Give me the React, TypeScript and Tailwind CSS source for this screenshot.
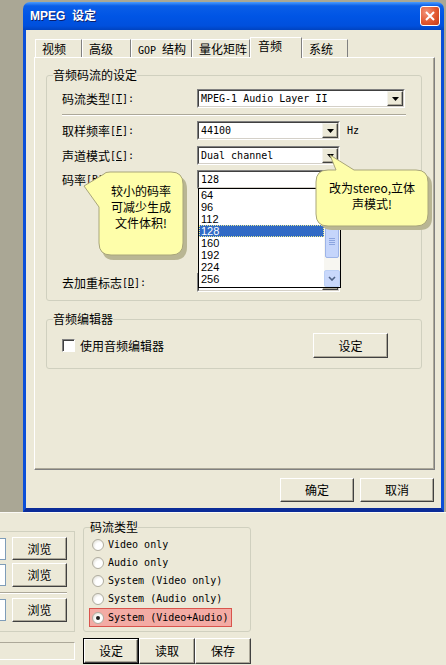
import React from "react";

const CJK = "font-['Noto_Sans_CJK_SC',sans-serif]";
const MONO = "font-['DejaVu_Sans_Mono','Noto_Sans_CJK_SC',monospace]";

function Btn({ className = "", children }: { className?: string; children: React.ReactNode }) {
  return (
    <div
      className={`${className} box-border flex items-center justify-center bg-[#ece9d8] border border-t-white border-l-white border-r-[#404040] border-b-[#404040] shadow-[inset_-1px_-1px_0_#aca899] text-[12px] leading-[14px] ${CJK}`}
    >
      {children}
    </div>
  );
}

function Arrow() {
  return (
    <div className="ml-auto w-[16px] h-full box-border flex items-center justify-center bg-[#ece9d8] border border-t-[#f4f3ee] border-l-[#f4f3ee] border-r-[#404040] border-b-[#404040] shadow-[inset_-1px_-1px_0_#aca899]">
      <svg width="7" height="4" viewBox="0 0 7 4">
        <path d="M0 0H7L3.5 4Z" fill="#000" />
      </svg>
    </div>
  );
}

function Combo({ className = "", text }: { className?: string; text: string }) {
  return (
    <div
      className={`${className} h-[19px] box-border flex bg-white border border-t-[#808080] border-l-[#808080] border-b-white border-r-white`}
    >
      <div className="flex-1 flex items-center box-border border border-t-[#404040] border-l-[#404040] border-b-[#d4d0c8] border-r-[#d4d0c8]">
        <span className={`pl-[2px] text-[10px] leading-[12px] ${MONO}`}>{text}</span>
        <Arrow />
      </div>
    </div>
  );
}

function Label({ cn, key1 }: { cn: string; key1: string }) {
  return (
    <div className="w-[135px] flex items-center">
      <span className={`text-[12px] leading-[14px] ${CJK}`}>{cn}</span>
      <span className={`text-[10px] leading-[12px] ${MONO}`}>
        [<span className="underline">{key1}</span>]:
      </span>
    </div>
  );
}

function Radio({ checked = false }: { checked?: boolean }) {
  return (
    <div className="w-[12px] h-[12px] rounded-full box-border border border-[#b0ada0] bg-[radial-gradient(circle_at_65%_65%,#ffffff_40%,#d6d4c8_100%)] flex items-center justify-center">
      {checked && <div className="w-[4px] h-[4px] rounded-full bg-[#202020]" />}
    </div>
  );
}

function Input6() {
  return <div className="w-[6px] h-[22px] bg-white border border-l-0 border-t-[#7f9db9] border-b-[#7f9db9] border-r-[#7f9db9]" />;
}

export default function App() {
  const items = ["64", "96", "112", "128", "160", "192", "224", "256"];
  const radios = ["Video only", "Audio only", "System (Video only)", "System (Audio only)"];
  return (
    <div className={`w-[446px] h-[665px] relative overflow-hidden bg-[#ece9d8] text-black ${CJK}`}>
      {/* top region with dialog */}
      <div className="h-[512px] bg-[#aaa795] pt-[2px] pl-[23px]">
        <div className="w-[421px] h-[510px] flex flex-col rounded-t-[7px] overflow-hidden">
          {/* title bar */}
          <div className="h-[28px] flex items-center pl-[7px] pr-[4px] bg-[linear-gradient(to_bottom,#4a9cff_0%,#0a5ee8_14%,#0055e5_50%,#0050dd_85%,#0043c0_100%)]">
            <span className="text-white font-bold text-[12px] leading-[14px] font-['Liberation_Sans','Noto_Sans_CJK_SC',sans-serif] [text-shadow:1px_1px_0_#0a1f6e]">
              MPEG&nbsp;&nbsp;设定
            </span>
            <div className="ml-auto w-[20px] h-[20px] rounded-[3px] border border-white bg-[radial-gradient(circle_at_30%_30%,#f2937a_0%,#e2582f_55%,#c43a16_100%)] flex items-center justify-center">
              <svg width="10" height="10" viewBox="0 0 10 10">
                <path d="M1 1L9 9M9 1L1 9" stroke="#fff" strokeWidth="2" />
              </svg>
            </div>
          </div>
          {/* body */}
          <div className="flex-1 flex flex-col bg-[#ece9d8] border-x-[3px] border-b-[4px] border-l-[#0a4fd8] border-r-[#0a4fd8] border-b-[#0b2c98] pl-[8px] pt-[7px] pr-[7px]">
            {/* tabs */}
            <div className="h-[20px] flex items-end pl-[1px] relative z-10">
              {[
                { t: "视频", w: "w-[47px]" },
                { t: "高级", w: "w-[49px]" },
                { t: "GOP 结构", w: "w-[61px]" },
                { t: "量化矩阵", w: "w-[58px]" },
                { t: "音频", w: "w-[52px]", sel: true },
                { t: "系统", w: "w-[46px]" },
              ].map((tab) =>
                tab.sel ? (
                  <div
                    key={tab.t}
                    className={`${tab.w} h-[21px] -mb-[1px] box-border bg-[#ece9d8] border border-b-0 border-t-white border-l-white border-r-[#808080] pl-[7px] pt-[1px] text-[12px] leading-[14px]`}
                  >
                    {tab.t}
                  </div>
                ) : (
                  <div
                    key={tab.t}
                    className={`${tab.w} h-[18px] box-border bg-[#ece9d8] border border-b-0 border-t-white border-l-white border-r-[#808080] pl-[6px] pt-[2px] text-[12px] leading-[14px]`}
                  >
                    {tab.t === "GOP 结构" ? (
                      <>
                        <span className={`text-[10px] ${MONO}`}>GOP </span>结构
                      </>
                    ) : (
                      tab.t
                    )}
                  </div>
                )
              )}
            </div>
            {/* panel */}
            <div className="w-[401px] h-[413px] box-border border border-t-white border-l-white border-r-[#808080] border-b-[#808080] shadow-[inset_-1px_-1px_0_#aca899] pl-[11px] pt-[10px]">
              <fieldset className="w-[376px] h-[233px] box-border border border-[#d0d0bf] rounded-[3px]">
                <legend className="ml-[6px] px-0 text-[12px] leading-[14px] text-black">音频码流的设定</legend>
                <div className="pl-[15px] pt-[7px] flex flex-col">
                  <div className="flex items-center">
                    <Label cn="码流类型" key1="T" />
                    <Combo className="w-[208px]" text="MPEG-1 Audio Layer II" />
                  </div>
                  <div className="mt-[6px] w-[344px] h-[2px] border-t border-t-[#aca899] border-b border-b-white" />
                  <div className="mt-[5px] flex items-center">
                    <Label cn="取样频率" key1="F" />
                    <Combo className="w-[143px]" text="44100" />
                    <span className={`ml-[7px] text-[10px] ${MONO}`}>Hz</span>
                  </div>
                  <div className="mt-[6px] flex items-center">
                    <Label cn="声道模式" key1="C" />
                    <Combo className="w-[143px]" text="Dual channel" />
                  </div>
                  <div className="mt-[5px] flex items-center">
                    <Label cn="码率" key1="B" />
                    <Combo className="w-[143px]" text="128" />
                  </div>
                  <div className="mt-[84px] flex items-center">
                    <Label cn="去加重标志" key1="D" />
                    <Combo className="w-[143px]" text="" />
                  </div>
                </div>
              </fieldset>
              <fieldset className="mt-[11px] w-[376px] h-[57px] box-border border border-[#d0d0bf] rounded-[3px]">
                <legend className="ml-[6px] px-0 text-[12px] leading-[14px]">音频编辑器</legend>
                <div className="pl-[15px] pr-[33px] pt-[7px] flex items-center">
                  <div className="w-[13px] h-[13px] box-border bg-white border border-t-[#808080] border-l-[#808080] border-b-white border-r-white shadow-[inset_1px_1px_0_#404040]" />
                  <span className="ml-[5px] text-[12px] leading-[14px]">使用音频编辑器</span>
                  <Btn className="ml-auto w-[75px] h-[25px]">设定</Btn>
                </div>
              </fieldset>
            </div>
            {/* bottom buttons */}
            <div className="mt-[8px] flex justify-end gap-[6px]">
              <Btn className="w-[74px] h-[24px]">确定</Btn>
              <Btn className="w-[74px] h-[24px]">取消</Btn>
            </div>
          </div>
        </div>
      </div>
      <div className="h-px bg-[#fbfaf6]" />

      {/* background window area */}
      <div className="flex">
        <div className="w-[75px] flex flex-col">
          <div className="mt-[18px] h-[101px] box-border border-t border-r border-b border-[#d0d0bf] flex flex-col pt-[5px]">
            <div className="flex items-center">
              <Input6 />
              <Btn className="ml-[6px] w-[55px] h-[23px]">浏览</Btn>
            </div>
            <div className="mt-[3px] flex items-center">
              <Input6 />
              <Btn className="ml-[6px] w-[55px] h-[24px]">浏览</Btn>
            </div>
            <div className="mt-[5px] w-[67px] h-[2px] border-t border-t-[#aca899] border-b border-b-white" />
            <div className="mt-[4px] flex items-center">
              <Input6 />
              <Btn className="ml-[6px] w-[55px] h-[24px]">浏览</Btn>
            </div>
          </div>
          <div className="mt-[10px] h-[18px] box-border border border-t-[#aca899] border-l-0 border-r-white border-b-white" />
        </div>
        <div className="ml-[8px] w-[168px] flex flex-col">
          <fieldset className="mt-[7px] h-[112px] box-border border border-[#d0d0bf] rounded-[3px]">
            <legend className="ml-[6px] px-0 text-[12px] leading-[14px]">码流类型</legend>
            <div className="pt-[2px] flex flex-col">
              {radios.map((r) => (
                <div key={r} className="ml-[5px] w-[143px] h-[18px] flex items-center pl-[3px]">
                  <Radio />
                  <span className={`ml-[4px] text-[10px] leading-[12px] ${MONO}`}>{r}</span>
                </div>
              ))}
              <div className="ml-[5px] w-[143px] h-[19px] box-border flex items-center pl-[2px] bg-[#f3aba4] border border-[#d9544c]">
                <Radio checked />
                <span className={`ml-[4px] text-[10px] leading-[12px] ${MONO}`}>System (Video+Audio)</span>
              </div>
            </div>
          </fieldset>
          <div className="mt-[6px] flex">
            <div className="w-[56px] h-[26px] box-border border border-black">
              <Btn className="w-full h-full">设定</Btn>
            </div>
            <Btn className="w-[56px] h-[26px]">读取</Btn>
            <Btn className="w-[56px] h-[26px]">保存</Btn>
          </div>
        </div>
      </div>

      {/* dropdown list overlay */}
      <div className="absolute left-[198px] top-[188px] w-[143px] h-[100px] box-border bg-white border border-black flex">
        <div className="flex-1 flex flex-col">
          {items.map((it) => (
            <div
              key={it}
              className={`h-[12px] pl-[2px] text-[11px] leading-[12px] font-['Liberation_Sans',sans-serif] ${
                it === "128" ? "bg-[#316ac5] text-white outline outline-1 outline-dotted outline-[#e8e890] -outline-offset-1" : ""
              }`}
            >
              {it}
            </div>
          ))}
        </div>
        <div className="w-[16px] h-full bg-[#f7f6f1] flex flex-col">
          <div className="h-[16px] rounded-[2px] border border-[#bcd0f5] bg-[#c9d8fb] flex items-center justify-center">
            <svg width="8" height="5" viewBox="0 0 8 5"><path d="M1 4L4 1L7 4" stroke="#4d6185" strokeWidth="1.6" fill="none" /></svg>
          </div>
          <div className="mt-[20px] h-[33px] mx-[1px] rounded-[2px] border border-[#9db4e8] bg-[#c5d5fb] flex flex-col items-center justify-center gap-[1px]">
            <div className="w-[6px] h-px bg-[#8ca5e0]" />
            <div className="w-[6px] h-px bg-[#8ca5e0]" />
            <div className="w-[6px] h-px bg-[#8ca5e0]" />
            <div className="w-[6px] h-px bg-[#8ca5e0]" />
          </div>
          <div className="mt-auto h-[17px] rounded-[2px] border border-[#bcd0f5] bg-[#c9d8fb] flex items-center justify-center">
            <svg width="8" height="5" viewBox="0 0 8 5"><path d="M1 1L4 4L7 1" stroke="#4d6185" strokeWidth="1.6" fill="none" /></svg>
          </div>
        </div>
      </div>

      {/* callouts drawing */}
      <svg className="absolute left-0 top-0 pointer-events-none" width="446" height="665" viewBox="0 0 446 665">
        <g>
          <path
            d="M110 174 H172 Q185 174 185 187 V245 Q185 258 172 258 H112 Q100 258 100 245 V209 L86 188 L106 176 Q106 174 110 174 Z"
            fill="#b9b694"
            transform="translate(2 2)"
          />
          <path
            d="M110 172 H171 Q183 172 183 184 V243 Q183 255 171 255 H111 Q99 255 99 243 V207 L84 186 L104 174 Q105 172 110 172 Z"
            fill="#fefeaa"
            stroke="#a9a67a"
            strokeWidth="1"
          />
        </g>
        <g>
          <path
            d="M330 172 H337 L331 157 L355 172 H418 Q430 172 430 184 V216 Q430 228 418 228 H330 Q318 228 318 216 V184 Q318 172 330 172 Z"
            fill="#b9b694"
            transform="translate(2 2)"
          />
          <path
            d="M328 170 H336 L330 155 L354 170 H416 Q428 170 428 182 V214 Q428 226 416 226 H328 Q316 226 316 214 V182 Q316 170 328 170 Z"
            fill="#fefeaa"
            stroke="#a9a67a"
            strokeWidth="1"
          />
        </g>
      </svg>
      <div className="absolute left-[99px] top-[183px] w-[84px] flex flex-col items-center text-[12px] leading-[16px]">
        <span>较小的码率</span>
        <span>可减少生成</span>
        <span>文件体积!</span>
      </div>
      <div className="absolute left-[316px] top-[180px] w-[112px] flex flex-col items-center text-[12px] leading-[16px]">
        <span>改为stereo,立体</span>
        <span>声模式!</span>
      </div>
    </div>
  );
}
